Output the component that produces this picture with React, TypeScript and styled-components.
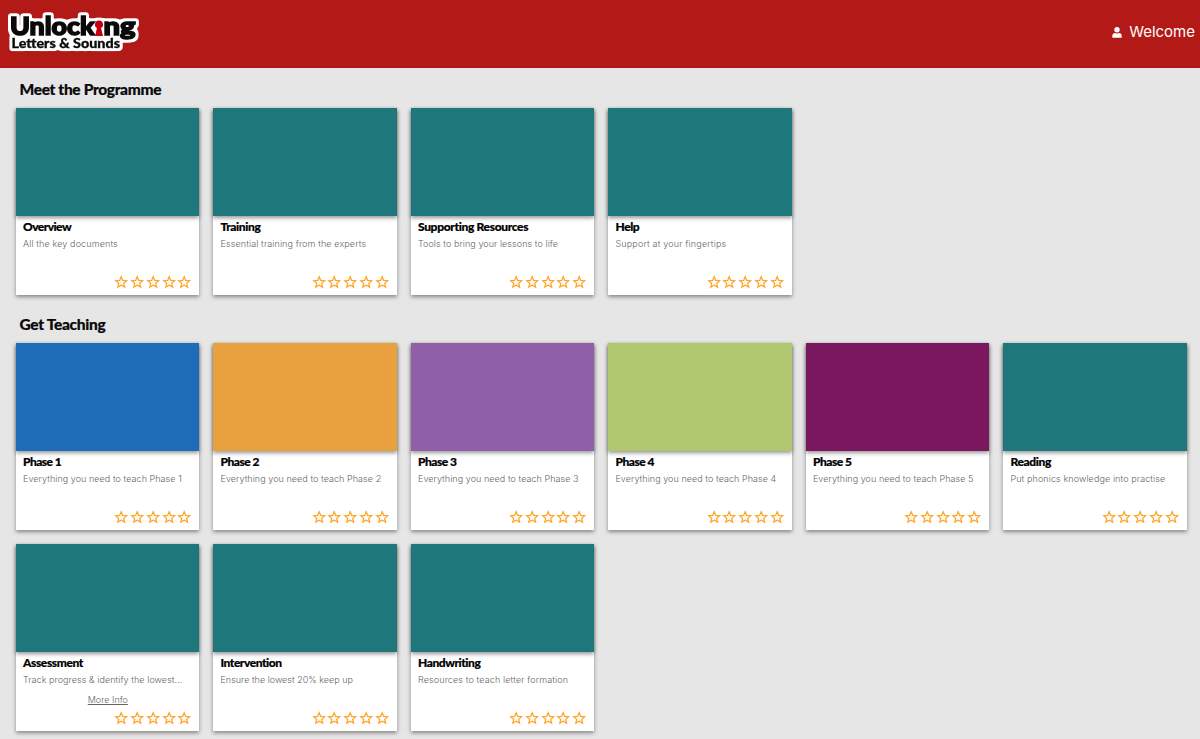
import React from "react";
import styled, { createGlobalStyle } from "styled-components";

const GlobalStyle = createGlobalStyle`
  * { box-sizing: border-box; }
  body { margin: 0; background: #e6e6e6; font-family: Inter, sans-serif; }
  h2, h3, p { margin: 0; }
`;

const Header = styled.header`
  display: flex;
  align-items: center;
  justify-content: space-between;
  height: 68px;
  padding: 0 5px 0 6px;
  background: #b21917;
  border-bottom: 1px solid #a51614;
`;

const Logo = styled.svg`
  display: block;
  width: 136px;
  height: 48px;
  margin-bottom: 3px;
`;

const User = styled.div`
  display: flex;
  align-items: center;
  gap: 7.5px;
  color: #fff;
  font: 400 15px/20px Inter, sans-serif;
  padding-bottom: 4px;
  svg { display: block; margin-top: 2px; }
`;

const Main = styled.main`
  padding-bottom: 8px;
`;

const Section = styled.section`
  padding: 11px 13px 0 16px;
  & + & { padding-top: 19px; }
`;

const SectionTitle = styled.h2<{ $spacing: number }>`
  height: 20px;
  margin: 0 0 9px 3.5px;
  font: 900 15.5px/20px Lato, sans-serif;
  letter-spacing: ${(p) => p.$spacing}px;
  color: #0a0a0a;
  -webkit-text-stroke: 0.2px #0a0a0a;
`;

const Grid = styled.div`
  display: grid;
  grid-template-columns: repeat(6, 183.2px);
  gap: 14px 14.3px;
`;

const Card = styled.article`
  display: flex;
  flex-direction: column;
  height: 187px;
  background: #fff;
  box-shadow: 0 1.5px 4px rgba(0, 0, 0, 0.42);
`;

const Cover = styled.div<{ $color: string }>`
  flex: 0 0 108px;
  background: ${(p) => p.$color};
  box-shadow: 0 1.5px 4px rgba(0, 0, 0, 0.42);
`;

const Body = styled.div`
  display: flex;
  flex: 1;
  flex-direction: column;
  padding: 3px 6.5px 4.5px 7px;
`;

const CardTitle = styled.h3<{ $spacing: number }>`
  font: 900 12px/16px Lato, sans-serif;
  letter-spacing: ${(p) => p.$spacing}px;
  color: #000;
  -webkit-text-stroke: 0.2px #000;
`;

const Description = styled.p<{ $spacing: number }>`
  margin-top: 2px;
  font: 300 9px/14px Inter, sans-serif;
  letter-spacing: ${(p) => p.$spacing}px;
  color: #69665f;
  white-space: nowrap;
`;

const MoreInfo = styled.a`
  align-self: center;
  margin-top: 6px;
  font: 300 9px/14px Inter, sans-serif;
  color: #69665f;
  text-decoration: underline;
`;

const Stars = styled.div`
  display: flex;
  justify-content: flex-end;
  margin-top: auto;
  svg {
    display: block;
    width: 16.4px;
    height: 16.4px;
    margin-left: -0.6px;
    fill: #ff9f1a;
    stroke: #ff9f1a;
    stroke-width: 0.15px;
  }
`;

const teal = "#1e777a";

type Item = { title: string; text: string; color: string; ts: number; ds: number; more?: boolean };

const programme: Item[] = [
  { title: "Overview", text: "All the key documents", color: teal, ts: -0.55, ds: 0.12 },
  { title: "Training", text: "Essential training from the experts", color: teal, ts: -0.36, ds: 0.11 },
  { title: "Supporting Resources", text: "Tools to bring your lessons to life", color: teal, ts: -0.33, ds: 0.06 },
  { title: "Help", text: "Support at your fingertips", color: teal, ts: -0.4, ds: 0.17 },
];

const teaching: Item[] = [
  { title: "Phase 1", text: "Everything you need to teach Phase 1", color: "#1e6bb8", ts: -0.55, ds: 0.05 },
  { title: "Phase 2", text: "Everything you need to teach Phase 2", color: "#e9a140", ts: -0.5, ds: 0.05 },
  { title: "Phase 3", text: "Everything you need to teach Phase 3", color: "#8f5fa8", ts: -0.5, ds: 0.05 },
  { title: "Phase 4", text: "Everything you need to teach Phase 4", color: "#b1c870", ts: -0.5, ds: 0.05 },
  { title: "Phase 5", text: "Everything you need to teach Phase 5", color: "#7b175e", ts: -0.5, ds: 0.05 },
  { title: "Reading", text: "Put phonics knowledge into practise", color: teal, ts: -0.38, ds: 0.1 },
  { title: "Assessment", text: "Track progress & identify the lowest...", color: teal, ts: -0.4, ds: 0.06, more: true },
  { title: "Intervention", text: "Ensure the lowest 20% keep up", color: teal, ts: -0.45, ds: 0 },
  { title: "Handwriting", text: "Resources to teach letter formation", color: teal, ts: -0.43, ds: 0.12 },
];

const Star = () => (
  <svg viewBox="0 0 24 24">
    <path d="M22 9.24l-7.19-.62L12 2 9.19 8.63 2 9.24l5.46 4.73L5.82 21 12 17.27 18.18 21l-1.63-7.03L22 9.24zM12 15.4l-3.76 2.27 1-4.28-3.32-2.88 4.38-.38L12 6.1l1.71 4.04 4.38.38-3.32 2.88 1 4.28L12 15.4z" />
  </svg>
);

const Cards = ({ items }: { items: Item[] }) => (
  <Grid>
    {items.map((it) => (
      <Card key={it.title}>
        <Cover $color={it.color} />
        <Body>
          <CardTitle $spacing={it.ts}>{it.title}</CardTitle>
          <Description $spacing={it.ds}>{it.text}</Description>
          {it.more && <MoreInfo>More Info</MoreInfo>}
          <Stars>
            {[0, 1, 2, 3, 4].map((n) => <Star key={n} />)}
          </Stars>
        </Body>
      </Card>
    ))}
  </Grid>
);

const Wordmark = () => (
  <Logo viewBox="6 8 136 48" fontFamily="Lato, sans-serif" fontWeight="900">
    <defs>
      <filter id="halo" filterUnits="userSpaceOnUse" x="6" y="8" width="136" height="48" colorInterpolationFilters="sRGB">
        <feMorphology in="SourceAlpha" operator="dilate" radius="2" />
        <feGaussianBlur stdDeviation="1.1" />
        <feColorMatrix values="0 0 0 0 1  0 0 0 0 1  0 0 0 0 1  0 0 0 5 -0.6" result="halo" />
        <feMerge>
          <feMergeNode in="halo" />
          <feMergeNode in="SourceGraphic" />
        </feMerge>
      </filter>
    </defs>
    <g filter="url(#halo)">
      <g fill="#0a0a0a" stroke="#0a0a0a" strokeWidth="1.5">
        <text x="10" y="35.300" fontSize="25" textLength="84.500" lengthAdjust="spacingAndGlyphs">Unlock</text>
        <text x="103.500" y="35.300" fontSize="25" textLength="32" lengthAdjust="spacingAndGlyphs">ng</text>
      </g>
      <text x="11.500" y="48" fill="#0a0a0a" stroke="#0a0a0a" strokeWidth="0.3" fontSize="12.500" textLength="108.500" lengthAdjust="spacingAndGlyphs">Letters &amp; Sounds</text>
      <path fill="#c4000c" d="M99 20.500a4 4 0 0 1 2 7.500l2 8h-8l2-8a4 4 0 0 1 2-7.500z" />
    </g>
  </Logo>
);

export default function App() {
  return (
    <>
      <GlobalStyle />
      <Header>
        <Wordmark />
        <User>
          <svg width="10" height="11" viewBox="0 0 10 11" fill="#fff">
            <circle cx="5" cy="2.800" r="2.700" />
            <path d="M0.300 10.800V9a3 3 0 0 1 3-3q1.700 1 3.400 0a3 3 0 0 1 3 3v1.800z" />
          </svg>
          <span>Welcome</span>
        </User>
      </Header>
      <Main>
        <Section>
          <SectionTitle $spacing={-0.34}>Meet the Programme</SectionTitle>
          <Cards items={programme} />
        </Section>
        <Section>
          <SectionTitle $spacing={-0.3}>Get Teaching</SectionTitle>
          <Cards items={teaching} />
        </Section>
      </Main>
    </>
  );
}
